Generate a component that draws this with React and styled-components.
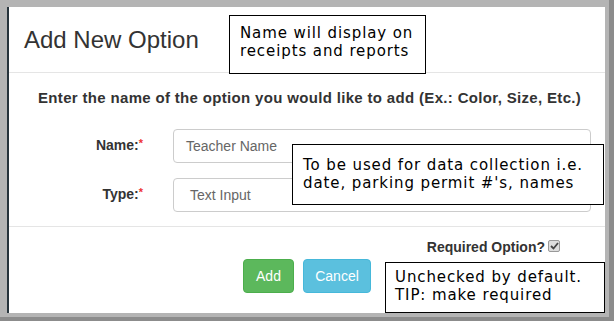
import React from "react";
import styled, { createGlobalStyle } from "styled-components";

const Global = createGlobalStyle`
  html, body { margin: 0; padding: 0; background: #fff; }
  body { font-family: "Liberation Sans", Arial, sans-serif; }
  * { box-sizing: border-box; }
`;

const Frame = styled.div`
  position: relative;
  width: 614px;
  height: 321px;
  background: #b4b4b4;
  border-right: 5px solid #8c8c8c;
  border-bottom: 4px solid #8c8c8c;
  padding: 7px 4px 4px 7px;
  display: flex;
`;

const Modal = styled.div`
  flex: 1;
  background: #fff;
  border-left: 2px solid #27343c;
  display: flex;
  flex-direction: column;
`;

const Header = styled.div`
  height: 66px;
  border-bottom: 1px solid #e5e5e5;
  display: flex;
  align-items: center;
  padding-left: 15px;
`;

const Title = styled.h4`
  margin: 0;
  font-size: 24px;
  font-weight: normal;
  color: #333;
`;

const Body = styled.div`
  padding: 16px 14px 14px 29px;
  border-bottom: 1px solid #e5e5e5;
`;

const Intro = styled.p`
  margin: 0 0 23px 0;
  font-size: 15px;
  letter-spacing: 0.33px;
  font-weight: bold;
  color: #333;
  white-space: nowrap;
`;

const FormRow = styled.div`
  display: grid;
  grid-template-columns: 105px 1fr;
  column-gap: 30px;
  align-items: center;
  margin-bottom: ${(p) => (p.$last ? "0" : "15px")};
`;

const Label = styled.label`
  text-align: right;
  font-size: 14px;
  font-weight: bold;
  color: #333;
  margin-top: -2px;
`;

const Star = styled.span`
  color: #e33;
  font-size: 11px;
  vertical-align: top;
`;

const Field = styled.div`
  height: 34px;
  border: 1px solid #ccc;
  border-radius: 4px;
  padding-left: ${(p) => (p.$select ? "16px" : "12px")};
  display: flex;
  align-items: center;
  font-size: 14px;
  color: #666;
`;

const Footer = styled.div`
  display: flex;
  flex-direction: column;
  padding-top: 12px;
`;

const RequiredRow = styled.div`
  display: flex;
  justify-content: flex-end;
  align-items: center;
  padding-right: 45px;
  font-size: 14px;
  font-weight: bold;
  color: #333;
  gap: 3px;
`;

const Check = styled.span`
  width: 12px;
  height: 12px;
  border: 1px solid #999;
  border-radius: 2px;
  background: #ddd;
  display: inline-flex;
  align-items: center;
  justify-content: center;
  margin-top: -3px;
`;

const Buttons = styled.div`
  display: flex;
  justify-content: center;
  gap: 9px;
  margin-top: 4px;
`;

const Button = styled.div`
  height: 34px;
  width: ${(p) => p.$w}px;
  border-radius: 4px;
  background: ${(p) => p.$bg};
  border: 1px solid ${(p) => p.$bd};
  color: #fff;
  font-size: 14px;
  display: flex;
  align-items: center;
  justify-content: center;
`;

const Note = styled.div`
  position: absolute;
  left: ${(p) => p.$x}px;
  top: ${(p) => p.$y}px;
  width: ${(p) => p.$w}px;
  height: ${(p) => p.$h}px;
  background: #fff;
  border: 1px solid #000;
  padding: ${(p) => p.$pt}px 0 0 ${(p) => p.$pl}px;
  font-family: "DejaVu Sans", Verdana, sans-serif;
  font-size: 15px;
  letter-spacing: 0.9px;
  line-height: 18px;
  color: #000;
  white-space: nowrap;
`;

export default function App() {
  return (
    <>
      <Global />
      <Frame>
        <Modal>
          <Header>
            <Title>Add New Option</Title>
          </Header>
          <Body>
            <Intro>
              Enter the name of the option you would like to add (Ex.: Color,
              Size, Etc.)
            </Intro>
            <FormRow>
              <Label>
                Name:<Star>*</Star>
              </Label>
              <Field>Teacher Name</Field>
            </FormRow>
            <FormRow $last>
              <Label>
                Type:<Star>*</Star>
              </Label>
              <Field $select>Text Input</Field>
            </FormRow>
          </Body>
          <Footer>
            <RequiredRow>
              Required Option?
              <Check>
                <svg width="9" height="8" viewBox="0 0 9 8">
                  <path d="M1 4 L3.5 6.5 L8 1" stroke="#444" strokeWidth="1.8" fill="none" />
                </svg>
              </Check>
            </RequiredRow>
            <Buttons>
              <Button $w={51} $bg="#5cb85c" $bd="#4cae4c">Add</Button>
              <Button $w={68} $bg="#5bc0de" $bd="#46b8da">Cancel</Button>
            </Buttons>
          </Footer>
        </Modal>
        <Note $x={229} $y={15} $w={197} $h={59} $pt={8} $pl={10}>
          Name will display on
          <br />
          receipts and reports
        </Note>
        <Note $x={292} $y={144} $w={312} $h={61} $pt={11} $pl={10}>
          To be used for data collection i.e.
          <br />
          date, parking permit #'s, names
        </Note>
        <Note $x={385} $y={262} $w={220} $h={51} $pt={5} $pl={9}>
          Unchecked by default.
          <br />
          TIP: make required
        </Note>
      </Frame>
    </>
  );
}
